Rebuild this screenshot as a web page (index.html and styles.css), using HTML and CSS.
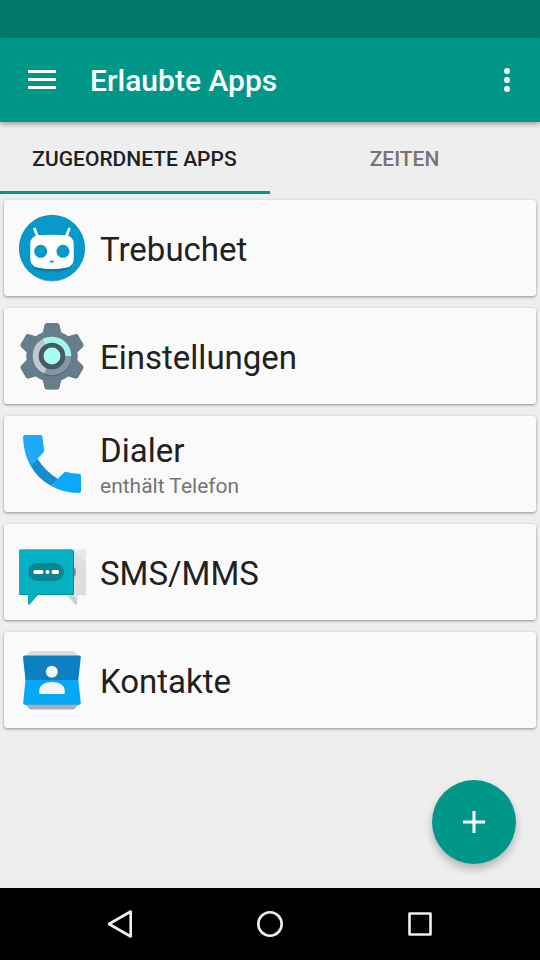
FILE: index.html
```html
<!doctype html>
<html lang="de">
  <head>
    <meta charset="UTF-8" />
    <meta name="viewport" content="width=device-width, initial-scale=1.0" />
    <title>Erlaubte Apps</title>
    <link rel="stylesheet" href="styles.css">
  </head>
  <body>
    <div class="status-bar"></div>

    <header class="toolbar">
      <button class="icon-button" aria-label="Menü">
        <svg width="28" height="20" viewBox="0 0 28 20">
          <path d="M0 0h28v3H0zM0 8h28v3H0zM0 16h28v3H0z" fill="#fff" />
        </svg>
      </button>
      <h1>Erlaubte Apps</h1>
      <button class="icon-button" aria-label="Mehr">
        <svg width="6" height="24" viewBox="0 0 6 24">
          <g fill="#fff">
            <circle cx="3" cy="3" r="3" />
            <circle cx="3" cy="12" r="3" />
            <circle cx="3" cy="21" r="3" />
          </g>
        </svg>
      </button>
    </header>

    <nav class="tabs">
      <a class="tab active">ZUGEORDNETE APPS</a>
      <a class="tab">ZEITEN</a>
    </nav>

    <main class="content">
      <ul class="app-list">
        <li class="app-card">
          <svg class="app-icon" viewBox="0 0 72 72">
            <circle cx="36" cy="36.500" r="33" fill="#066f98" opacity=".5" />
            <circle cx="36" cy="35.800" r="33" fill="#0898ca" />
            <path d="M15 50c2 9 9 9.500 21 9.500s19-.5 21-9.500z" fill="#087daa" />
            <g stroke="#fff" stroke-width="2.8" stroke-linecap="round">
              <path d="M18.600 17l3.200 8M53.200 17l-3.200 8" />
            </g>
            <path d="M22 23.300Q36 22 50 23.300Q57.700 24.500 57.700 32V47Q57.700 53.500 51 55.500Q36 58.500 21 55.500Q14.300 53.500 14.300 47V32Q14.300 24.500 22 23.300z" fill="#fff" />
            <circle cx="24.700" cy="39.300" r="6.500" fill="#0898ca" />
            <circle cx="47" cy="39.300" r="6.500" fill="#0898ca" />
            <path d="M33.500 48.700h4.600q-.3 2-2.300 2t-2.300-2z" fill="#0898ca" />
          </svg>
          <div class="app-text">
            <span class="app-name">Trebuchet</span>
          </div>
        </li>

        <li class="app-card">
          <svg class="app-icon" viewBox="0 0 72 72">
            <defs>
              <path id="tooth" d="M26.500 14L28.800 4.600Q29.200 3 31 3H41Q42.800 3 43.200 4.600L45.500 14z" />
              <g id="gear">
                <circle cx="36" cy="36" r="25.500" />
                <use href="#tooth" />
                <use href="#tooth" transform="rotate(60 36 36)" />
                <use href="#tooth" transform="rotate(120 36 36)" />
                <use href="#tooth" transform="rotate(180 36 36)" />
                <use href="#tooth" transform="rotate(240 36 36)" />
                <use href="#tooth" transform="rotate(300 36 36)" />
              </g>
            </defs>
            <use href="#gear" y=".5" fill="#4d636d" />
            <use href="#gear" fill="#647f8b" />
            <circle cx="36" cy="37" r="19.500" fill="#51666f" />
            <circle cx="36" cy="36" r="19.300" fill="#8495a3" />
            <path d="M36 36L28 53.600A19.300 19.300 0 0 1 26.500 19.200z" fill="#bcc8d1" />
            <path d="M36 36L26.500 19.200A19.300 19.300 0 0 1 55.300 36z" fill="#a1f7e8" />
            <circle cx="36" cy="36" r="13.300" fill="#455a64" />
            <circle cx="36" cy="36" r="8.500" fill="#a5ffeb" />
          </svg>
          <div class="app-text">
            <span class="app-name">Einstellungen</span>
          </div>
        </li>

        <li class="app-card">
          <svg class="app-icon" viewBox="0 0 72 72">
            <path d="M14.300 37.200L21.300 30.500Q29.500 43.500 42 51L35 57.700Q22 51 14.300 37.200z" fill="#158ccf" />
            <path d="M9 7H24.600Q26.300 7 26.500 8.800Q26.700 15 28.200 22Q28.400 23.200 27.600 24.200L21.300 31L14.300 37.700Q7.500 25 7 9Q7 7 9 7z" fill="#1caaf6" />
            <path d="M34.800 57.700L41.500 51L48.200 44.400Q49 43.600 50.500 43.900Q56 45.500 63 45.800Q65 46 65 47.800V63Q65 65 63 65Q47 64.800 34.800 57.700z" fill="#0ea9f6" />
          </svg>
          <div class="app-text">
            <span class="app-name">Dialer</span>
            <span class="app-note">enthält Telefon</span>
          </div>
        </li>

        <li class="app-card">
          <svg class="app-icon" viewBox="0 0 72 72">
            <path d="M40 14H68.500Q70 14 70 15.500V57.500Q70 59 68.500 59H61.300V68Q60.500 69.500 59 68.500L50 59H40z" fill="#cfcfcf" />
            <path d="M40 13.500H68.500Q70 13.500 70 15V56.800Q70 58.300 68.500 58.300H60.800V67.500Q60.300 69 59 68L50 58.300H40z" fill="#e8e8e8" />
            <path d="M57 14L70 27V57Q70 58 69 58H57z" fill="#dedede" />
            <path d="M52 58.500H57L60.800 63V67.500Q60.300 69 59 68z" fill="#d2cccd" />
            <path d="M57 30Q60 32 60 36T57 42z" fill="#829297" />
            <path d="M4.500 14H56.500Q58 14 58 15.500V57.500Q58 59 56.500 59H21.700L13.500 68.500Q12 69 12 67.500V59H4.500Q3 59 3 57.500V15.500Q3 14 4.500 14z" fill="#068793" />
            <path d="M4.500 13.300H55.700Q57.200 13.300 57.200 14.800V56.800Q57.200 58.300 55.700 58.300H21.300L13.500 68Q12 68.500 12 67V58.300H4.500Q3 58.300 3 56.800V14.800Q3 13.300 4.500 13.300z" fill="#04b0c2" />
            <rect x="12.300" y="27" width="35.700" height="18" rx="9" fill="#0b8594" />
            <g fill="#fff">
              <rect x="17.500" y="34" width="9.800" height="4" rx="1.500" />
              <circle cx="31.500" cy="36" r="2" />
              <rect x="35.700" y="34" width="7.300" height="4" rx="1.500" />
            </g>
          </svg>
          <div class="app-text">
            <span class="app-name">SMS/MMS</span>
          </div>
        </li>

        <li class="app-card">
          <svg class="app-icon" viewBox="0 0 72 72">
            <path d="M9 60L13.500 65Q14 65.500 15 65.500H57Q58 65.500 58.500 65L63 60z" fill="#a9adb0" />
            <path d="M9 12.500L13.500 7.500Q14 7 15 7H57Q58 7 58.500 7.500L63 12.500z" fill="#d8dfe2" />
            <path d="M8.500 11.500H63.500Q65 11.500 64.800 13.500L62.300 36H9.500L7 13.500Q7 11.500 8.500 11.500z" fill="#0c7fc0" />
            <path d="M9.500 36H62.300L64.800 58.800Q65 60.800 63.500 60.800H8.500Q7 60.800 7.200 58.800z" fill="#06a7f4" />
            <circle cx="35.800" cy="27.700" r="6" fill="#f3f5f6" />
            <path d="M23.300 50V46.500C23.300 41 29 38 36 38S48.700 41 48.700 46.500V50z" fill="#f5f5f5" />
          </svg>
          <div class="app-text">
            <span class="app-name">Kontakte</span>
          </div>
        </li>
      </ul>
    </main>

    <button class="fab" aria-label="App hinzufügen">
      <svg width="22" height="22" viewBox="0 0 22 22">
        <path d="M9.500 0h3v9.500H22v3h-9.500V22h-3v-9.500H0v-3h9.500z" fill="#fff" />
      </svg>
    </button>

    <footer class="nav-bar">
      <svg class="nav-icon" viewBox="0 0 30 30">
        <path d="M4 15L25.700 2.500V27.500z" />
      </svg>
      <svg class="nav-icon" viewBox="0 0 30 30">
        <circle cx="15" cy="15" r="11.700" />
      </svg>
      <svg class="nav-icon" viewBox="0 0 30 30">
        <rect x="4.500" y="4.500" width="21" height="21" />
      </svg>
    </footer>
  </body>
</html>
```

FILE: styles.css
```css
* {
  margin: 0;
  padding: 0;
  box-sizing: border-box;
}

body {
  display: flex;
  flex-direction: column;
  height: 100vh;
  overflow: hidden;
  background: #eeeeee;
  color: #212121;
  font-family: Roboto, sans-serif;
}

button {
  border: none;
  background: none;
}

svg {
  display: block;
}

.status-bar {
  height: 38px;
  background: #00796b;
}

.toolbar {
  display: flex;
  align-items: center;
  height: 84px;
  padding: 0 30px 0 28px;
  background: #009688;
  box-shadow: 0 2px 5px rgba(0, 0, 0, 0.35);
}

.toolbar h1 {
  flex: 1;
  margin-left: 34px;
  padding-top: 1px;
  color: #fff;
  font-size: 30px;
  font-weight: 500;
}

.tabs {
  display: flex;
  height: 72px;
}

.tab {
  flex: 1;
  padding-right: 1px;
  border-bottom: 3px solid transparent;
  color: #757575;
  font-size: 21px;
  font-weight: 500;
  line-height: 75px;
  text-align: center;
}

.tab.active {
  border-bottom-color: #009688;
  color: #212121;
}

.content {
  flex: 1;
  padding: 6px 4px 0;
}

.app-list {
  display: flex;
  flex-direction: column;
  gap: 12px;
  list-style: none;
}

.app-card {
  display: flex;
  align-items: center;
  gap: 12px;
  height: 96px;
  padding: 0 12px;
  border-radius: 3px;
  background: #fafafa;
  box-shadow: 0 1px 3px rgba(0, 0, 0, 0.4);
}

.app-icon {
  width: 72px;
  height: 72px;
}

.app-text {
  display: flex;
  flex-direction: column;
  padding-top: 3px;
}

.app-name {
  font-size: 33px;
  line-height: 39px;
}

.app-note {
  margin-bottom: -3px;
  color: #757575;
  font-size: 21px;
  line-height: 33px;
}

.fab {
  position: absolute;
  right: 24px;
  bottom: 96px;
  display: flex;
  align-items: center;
  justify-content: center;
  width: 84px;
  height: 84px;
  border-radius: 50%;
  background: #009688;
  box-shadow: 0 5px 9px rgba(0, 0, 0, 0.25);
}

.nav-bar {
  display: flex;
  align-items: center;
  justify-content: center;
  gap: 120px;
  height: 72px;
  background: #000;
}

.nav-icon {
  width: 30px;
  height: 30px;
  fill: none;
  stroke: #eeeeee;
  stroke-width: 2.6;
  stroke-linejoin: round;
}
```
